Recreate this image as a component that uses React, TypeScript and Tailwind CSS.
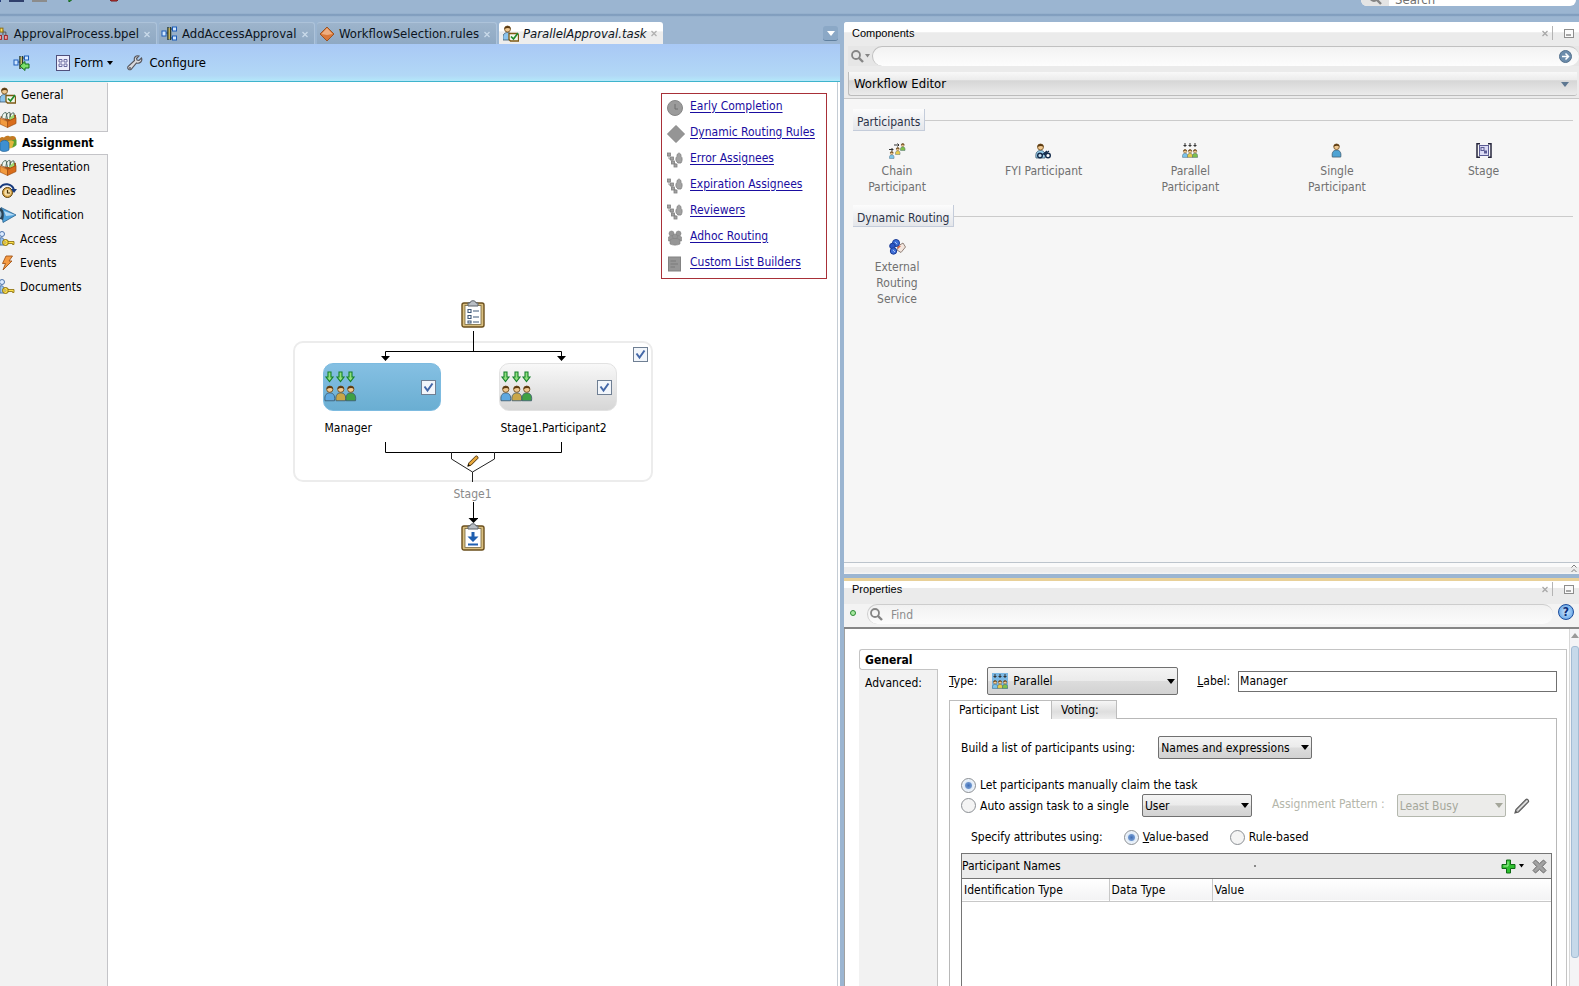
import { useState } from 'react'
import type { ReactNode } from 'react'
import clsx from 'clsx'

/* ---------- icons ---------- */

type IconProps = { className?: string }

function Person({ x, y, color, s = 1 }: { x: number; y: number; color: string; s?: number }) {
  return (
    <g transform={`translate(${x} ${y}) scale(${s})`}>
      <path d="M1 15 C0 9 3 7.500 5.500 7.500 C8 7.500 11 9 10 15 Z" fill={color} stroke="#3d5a6e" strokeWidth="0.800" />
      <circle cx="5.500" cy="4" r="3" fill="#f0c890" stroke="#6b4a1a" strokeWidth="0.800" />
      <path d="M2.500 4 C2 0 9 0 8.500 4 C7 2.500 5 2.500 2.500 4 Z" fill="#5b3a12" />
    </g>
  )
}

function FlowIcon({ className, arrow }: IconProps & { arrow?: boolean }) {
  return (
    <svg className={className} width="17" height="16" viewBox="0 0 17 16" fill="none">
      <path d="M4 7H7M10 3H12M10 12H12" stroke="#1d3f7a" />
      <path d="M7 1V14M9.500 1V14" stroke="#2c3b2c" strokeWidth="1.500" />
      <path d="M8.200 2V13" stroke="#e8c33a" />
      <rect x="1" y="5" width="4" height="5" fill="#cfe6ff" stroke="#1c5cb8" />
      <rect x="11.500" y="1" width="4" height="4" fill="#cfe6ff" stroke="#1c5cb8" />
      {!arrow && <rect x="11.500" y="10" width="4" height="4" fill="#cfe6ff" stroke="#1c5cb8" />}
      {arrow && <path d="M7 11 L12 6.500 V9 H16 V13 H12 V15.500 Z" fill="#7ee06a" stroke="#12701a" />}
    </svg>
  )
}

function BpelIcon({ className }: IconProps) {
  return (
    <svg className={className} width="9" height="16" viewBox="0 0 9 16" fill="none">
      <path d="M1 4H3V9M3 6H6V10" stroke="#555" />
      <rect x="0" y="2" width="3" height="4" fill="#ffe05c" stroke="#8a6a10" />
      <rect x="4.500" y="9.500" width="3" height="4" fill="#f3a0a0" stroke="#a02828" />
      <rect x="-1" y="9.500" width="2.500" height="4" fill="#f3a0a0" stroke="#a02828" />
    </svg>
  )
}

function RulesIcon({ className }: IconProps) {
  return (
    <svg className={className} width="16" height="16" viewBox="0 0 16 16">
      <path d="M8 1 L15 8 L8 15 L1 8 Z" fill="#d9783a" stroke="#9a5424" />
      <path d="M8 2 L13.500 8 L8 9 L2.500 8 Z" fill="#f6c39c" opacity="0.700" />
    </svg>
  )
}

function TaskIcon({ className }: IconProps) {
  return (
    <svg className={className} width="16" height="17" viewBox="0 0 16 17">
      <Person x={-1} y={0} color="#8cc4ee" />
      <path d="M6 8.500 H14 L15.500 10 V16 H7.500 L6 14.500 Z" fill="#f4f7ec" stroke="#7d5a14" strokeWidth="1.300" />
      <path d="M8 11.500 L10.500 14 L15 8" stroke="#1f8a2a" strokeWidth="1.700" fill="none" />
    </svg>
  )
}

function BoxIcon({ className }: IconProps) {
  return (
    <svg className={className} width="17" height="17" viewBox="0 0 17 17">
      <path d="M0 6 L8 2 L16 4 V8 L8 11 Z" fill="#a8561a" />
      <path d="M2 7 C2 3 4 1.500 6 1.500 L7.500 8 M6 8 C6 3 8 1 10 1.500 V8 M10 8 C10 3 12 1.500 14 2 V7" fill="#eef5ee" stroke="#3f5f55" strokeWidth="0.900" />
      <path d="M9 7.500 L13.500 3.500 L14.500 6.500 L10 9 Z" fill="#9fd86a" />
      <path d="M0 7 L7.500 10.500 V16.500 L0 13 Z" fill="#f19a3e" stroke="#a8561a" strokeWidth="0.700" />
      <path d="M7.500 10.500 L16 6.500 V12.500 L7.500 16.500 Z" fill="#d96d1c" stroke="#9c4c0c" strokeWidth="0.700" />
    </svg>
  )
}

function AssignIcon({ className }: IconProps) {
  return (
    <svg className={className} width="17" height="17" viewBox="0 0 17 17">
      <path d="M5 13 V4 C8 0 15 1 16.500 5 V10 C15 12 12 13 10 13 Z" fill="#5ba12e" />
      <path d="M3 5 C4 0 9 0 10 2 C12 0 16 1 16 4 C12 6 6 6 3 5 Z" fill="#c47a24" />
      <path d="M7 14 V7 C9 5 13 5 14 7 L12 13 Z" fill="#e2b53e" />
      <path d="M0 3 C2 1 5 2 5 5 L3 7 H0 Z" fill="#c47a24" />
      <path d="M0 15 V8 C2 4 8 5 9 8 L9 15 C6 17 2 17 0 15 Z" fill="#3d8fd0" stroke="#205a8c" strokeWidth="0.600" />
    </svg>
  )
}

function ClockIcon({ className }: IconProps) {
  return (
    <svg className={className} width="17" height="16" viewBox="0 0 17 16" fill="none">
      <circle cx="7.500" cy="9.500" r="5" fill="#d9a548" stroke="#5f430c" />
      <circle cx="7.500" cy="9.500" r="3.200" fill="#f6dfa8" />
      <path d="M7.500 7V10H10" stroke="#4a3408" strokeWidth="1.200" />
      <path d="M0 5 C3 -0.500 12 0 14 7" stroke="#173a7c" strokeWidth="2" />
      <path d="M11 6 H17 L14 10 Z" fill="#173a7c" />
    </svg>
  )
}

function HornIcon({ className }: IconProps) {
  return (
    <svg className={className} width="17" height="16" viewBox="0 0 17 16">
      <path d="M1 0.500 L16 8 L3 15.500 Z" fill="#4fa3dd" stroke="#28618c" strokeWidth="0.800" />
      <path d="M4 4 L15 8 L6 9 Z" fill="#b7dcf6" />
      <path d="M0 1 C3 1 5 6 3 13 L0 12 Z" fill="#2c4456" />
      <path d="M0 4 C2 5 2 9 0 11 Z" fill="#8fb4cc" />
    </svg>
  )
}

function KeyIcon({ className }: IconProps) {
  return (
    <svg className={className} width="15" height="16" viewBox="0 0 15 16" fill="none">
      <circle cx="2" cy="3" r="2.500" fill="#dcebff" stroke="#4d74ab" />
      <path d="M0 7 C3 6 5 8 4 14 H0 Z" fill="#9cc7ee" stroke="#4d74ab" />
      <circle cx="5.500" cy="11.500" r="3" fill="#ffe24a" stroke="#866a08" />
      <circle cx="5" cy="11.500" r="0.900" fill="#fff" stroke="#866a08" strokeWidth="0.600" />
      <path d="M8 10.500 H14 V13.500 H12.500 V12.500 H8 Z" fill="#ffe24a" stroke="#866a08" strokeWidth="0.800" />
    </svg>
  )
}

function BoltIcon({ className }: IconProps) {
  return (
    <svg className={className} width="15" height="16" viewBox="0 0 15 16">
      <path d="M6 1 H12.500 L9 6 H12 L3 15 L5.500 8.500 H2.500 Z" fill="#f59a42" stroke="#a2561a" strokeWidth="0.900" />
    </svg>
  )
}

function FormIcon({ className }: IconProps) {
  return (
    <svg className={className} width="14" height="16" viewBox="0 0 14 16" fill="none">
      <rect x="0.500" y="0.500" width="13" height="15" fill="#eeeefc" stroke="#50507c" />
      <path d="M3 4.500h3v2.500h-3zM8 4.500h3v2.500h-3zM3 9h3v2.500h-3zM8 9h3v2.500h-3z" stroke="#6a6aa0" strokeWidth="1" />
    </svg>
  )
}

function WrenchIcon({ className }: IconProps) {
  return (
    <svg className={className} width="16" height="16" viewBox="0 0 16 16">
      <path
        d="M14.500 3 L12 5.500 L10 5 L9.500 3.500 L12 1 C9 0 6.500 2.500 7.500 5.500 L1 11.500 C0 13.500 2 15.500 4 14.500 L9.500 8 C13 9 15.800 6 14.500 3 Z"
        fill="#d9d9dc"
        stroke="#55555c"
        strokeWidth="1.100"
      />
      <circle cx="3" cy="13" r="0.900" fill="#55555c" />
    </svg>
  )
}

function Caret({ className, size = 6 }: IconProps & { size?: number }) {
  return (
    <svg className={className} width={size} height={size / 2 + 1} viewBox="0 0 8 5" preserveAspectRatio="none" fill="currentColor">
      <path d="M0 0H8L4 5Z" />
    </svg>
  )
}

function CrossIcon({ className }: IconProps) {
  return (
    <svg className={className} width="6" height="7" viewBox="0 0 6 7" fill="none" stroke="currentColor" strokeWidth="1.300">
      <path d="M0.500 1 L5.500 6 M5.500 1 L0.500 6" />
    </svg>
  )
}

function MinimizeIcon() {
  return (
    <svg width="10" height="9" viewBox="0 0 10 9" fill="none">
      <rect x="0.500" y="0.500" width="9" height="8" fill="#fafafa" stroke="#8d8d8d" />
      <path d="M2 6H7" stroke="#8d8d8d" strokeWidth="1.500" />
    </svg>
  )
}

function SearchIcon({ className }: IconProps) {
  return (
    <svg className={className} width="13" height="13" viewBox="0 0 13 13" fill="none" stroke="#858585">
      <circle cx="5" cy="5" r="4" strokeWidth="1.800" />
      <path d="M8 8 L12 12" strokeWidth="2.400" />
    </svg>
  )
}

/* grey icons beside the links */
function GreyClock() {
  return (
    <svg width="18" height="18" viewBox="0 0 18 18" fill="none">
      <circle cx="8" cy="9" r="7.500" fill="#9b9b9b" stroke="#868686" />
      <path d="M8 5V10H11" stroke="#6e6e6e" />
    </svg>
  )
}

function GreyDiamond() {
  return (
    <svg width="18" height="18" viewBox="0 0 18 18">
      <path d="M9 0.500 L17.500 9 L9 17.500 L0.500 9 Z" fill="#959595" stroke="#858585" />
    </svg>
  )
}

function GreyAssignees() {
  return (
    <svg width="18" height="18" viewBox="0 0 18 18" fill="#a2a2a2" stroke="#808080" strokeWidth="0.800">
      <path d="M2 4 V8 H5 V12 H8 V14" fill="none" />
      <rect x="0.500" y="2" width="3" height="3" />
      <rect x="3.500" y="6" width="3" height="3" />
      <rect x="4.500" y="10" width="3" height="3" />
      <rect x="7" y="13" width="3" height="3" />
      <path d="M10 11 C8 9 9 6 10 5.500 C9.500 1 14.500 1 14 5.500 C15.500 6 15.500 10 14 12 H11 Z" />
    </svg>
  )
}

function GreyGroup() {
  return (
    <svg width="18" height="18" viewBox="0 0 18 18" fill="#969696" stroke="#828282" strokeWidth="0.600">
      <circle cx="4.500" cy="4.500" r="2.500" />
      <circle cx="11.500" cy="4.500" r="2.500" />
      <path d="M1.500 8 C3 6 13 6 14.500 8 V12 H1.500 Z" />
      <circle cx="8" cy="7.500" r="2.500" />
      <path d="M3 11 C5 9 11 9 13 11 V15 C10 16.500 6 16.500 3 15 Z" />
    </svg>
  )
}

function GreyList() {
  return (
    <svg width="18" height="18" viewBox="0 0 18 18" fill="none">
      <rect x="1.500" y="2" width="12" height="14" fill="#969696" stroke="#838383" />
      <path d="M3.500 6H9M3.500 9H11M3.500 12H8" stroke="#7a7a7a" />
    </svg>
  )
}

/* component palette */
function ChainIcon() {
  return (
    <svg width="17" height="16" viewBox="0 0 17 16" fill="none">
      <path d="M0 6.500H4M5 2H10M2.500 5L4 6.500L2.500 8M8.500 0.500L10 2L8.500 3.500" stroke="#333" />
      <Person x={0} y={8} s={0.5} color="#7cc4ea" />
      <Person x={6} y={4} s={0.5} color="#e8cc4a" />
      <Person x={11} y={0} s={0.5} color="#7fc04a" />
    </svg>
  )
}

function FyiIcon() {
  return (
    <svg width="17" height="16" viewBox="0 0 17 16" fill="none">
      <Person x={0} y={0} color="#9ad0ee" />
      <circle cx="5" cy="12.500" r="2.300" fill="#cfe6f4" stroke="#142c4c" strokeWidth="1.400" />
      <circle cx="13" cy="12.500" r="2.300" fill="#fff" stroke="#142c4c" strokeWidth="1.400" />
      <path d="M7 12 L12 8 M9 12 L14 8" stroke="#142c4c" strokeWidth="1.100" />
    </svg>
  )
}

function ParallelIcon() {
  return (
    <svg width="16" height="15" viewBox="0 0 16 15" fill="none">
      <path d="M3 0V4M8 0V4M13 0V4M1.500 2.500H4.500M6.500 2.500H9.500M11.500 2.500H14.500" stroke="#333" />
      <Person x={0} y={6} s={0.56} color="#7cc4ea" />
      <Person x={5} y={6} s={0.56} color="#e8cc4a" />
      <Person x={10} y={6} s={0.56} color="#7fc04a" />
    </svg>
  )
}

function SingleIcon() {
  return (
    <svg width="12" height="15" viewBox="0 0 12 16">
      <Person x={0} y={0} color="#4ea3d4" />
    </svg>
  )
}

function StageIcon() {
  return (
    <svg width="16" height="15" viewBox="0 0 16 15" fill="none">
      <path d="M4 0.750H1V14.250H4M12 0.750H15V14.250H12" stroke="#26263c" strokeWidth="1.500" />
      <rect x="3.500" y="2.500" width="9" height="10" fill="#dcdcf4" stroke="#5c5c94" />
      <rect x="5" y="4.500" width="3" height="3" stroke="#5c5c94" />
      <rect x="8" y="7.500" width="3" height="3" fill="#5c5c94" />
    </svg>
  )
}

function ExternalIcon() {
  return (
    <svg width="17" height="16" viewBox="0 0 17 16" fill="none">
      <path d="M9 7 L14 4 L16.500 8 L12 13.500 L8 11 Z" fill="#f3e6de" stroke="#7a6a62" strokeWidth="0.800" />
      <path d="M8 6 L12 7 L9 10 Z" fill="#d8694a" />
      <circle cx="7" cy="4" r="3.500" fill="#3f6fd8" stroke="#1c3c94" />
      <circle cx="3.500" cy="7" r="2.800" fill="#2c56c4" stroke="#1c3c94" />
      <circle cx="4.500" cy="12" r="3.200" fill="#3f6fd8" stroke="#1c3c94" />
      <path d="M6 3L8 5M4 11L6 13" stroke="#a9c4f6" />
    </svg>
  )
}

function Clipboard({ children }: { children: ReactNode }) {
  return (
    <svg width="24" height="28" viewBox="0 0 24 28" fill="none">
      <rect x="1" y="3" width="22" height="24" rx="2" fill="#d9bf80" stroke="#6b4f1c" strokeWidth="1.400" />
      <rect x="4" y="5.500" width="16" height="19" fill="#fff" stroke="#77683f" strokeWidth="0.800" />
      <path d="M7 6 V3 H9 C9 0 15 0 15 3 H17 V6 Z" fill="#b9bec4" stroke="#5e646b" />
      {children}
    </svg>
  )
}

function ParallelPeople() {
  return (
    <svg width="34" height="32" viewBox="0 0 34 32">
      {[5.5, 16.5, 26.5].map((cx) => (
        <path
          key={cx}
          transform={`translate(${cx} 0)`}
          d="M-1.500 1 H1.500 V6 H3.500 L0 10.500 L-3.500 6 H-1.500 Z"
          fill="#8ee07c"
          stroke="#15802a"
          strokeWidth="1.100"
        />
      ))}
      <Person x={0} y={14} color="#5fa8e0" s={1.05} />
      <Person x={11} y={14} color="#c9a648" s={1.05} />
      <Person x={21} y={14} color="#3fa044" s={1.05} />
    </svg>
  )
}

function PencilIcon({ body, edge }: { body: string; edge: string }) {
  return (
    <svg width="16" height="16" viewBox="0 0 16 16">
      <path d="M1 15 L2 11.500 L12 1.500 C13 0.500 15 2 14.500 3.800 L4.500 14 Z" fill={body} stroke={edge} strokeWidth="1.200" />
      <path d="M1 15 L1.800 12.500 L3.500 14.200 Z" fill={edge} />
      <path d="M4 12 L13 3" stroke="#fff" strokeWidth="1" opacity="0.600" />
    </svg>
  )
}

/* ---------- data ---------- */

const editorTabs = [
  { name: 'ApprovalProcess.bpel', icon: <BpelIcon />, width: 'w-[157px] pl-0 gap-[5px]' },
  { name: 'AddAccessApproval', icon: <FlowIcon />, width: 'w-[156px] pl-[2px] gap-1' },
  { name: 'WorkflowSelection.rules', icon: <RulesIcon />, width: 'w-[180px] pl-[2px] gap-1' },
  { name: 'ParallelApproval.task', icon: <TaskIcon />, width: 'w-[164px] pl-1 gap-1', active: true },
]

const navItems = [
  { name: 'General', icon: <TaskIcon /> },
  { name: 'Data', icon: <BoxIcon /> },
  { name: 'Assignment', icon: <AssignIcon />, active: true },
  { name: 'Presentation', icon: <BoxIcon /> },
  { name: 'Deadlines', icon: <ClockIcon /> },
  { name: 'Notification', icon: <HornIcon /> },
  { name: 'Access', icon: <KeyIcon /> },
  { name: 'Events', icon: <BoltIcon /> },
  { name: 'Documents', icon: <KeyIcon /> },
]

const taskLinks = [
  { name: 'Early Completion', icon: <GreyClock /> },
  { name: 'Dynamic Routing Rules', icon: <GreyDiamond /> },
  { name: 'Error Assignees', icon: <GreyAssignees /> },
  { name: 'Expiration Assignees', icon: <GreyAssignees /> },
  { name: 'Reviewers', icon: <GreyAssignees /> },
  { name: 'Adhoc Routing', icon: <GreyGroup /> },
  { name: 'Custom List Builders', icon: <GreyList /> },
]

const palette = [
  {
    title: 'Participants',
    items: [
      { lines: ['Chain', 'Participant'], icon: <ChainIcon /> },
      { lines: ['FYI Participant'], icon: <FyiIcon /> },
      { lines: ['Parallel', 'Participant'], icon: <ParallelIcon /> },
      { lines: ['Single', 'Participant'], icon: <SingleIcon /> },
      { lines: ['Stage'], icon: <StageIcon /> },
    ],
  },
  {
    title: 'Dynamic Routing',
    items: [{ lines: ['External', 'Routing', 'Service'], icon: <ExternalIcon /> }],
  },
]

/* ---------- small controls ---------- */

function CheckBox({ label }: { label: string }) {
  const [checked, setChecked] = useState(true)
  return (
    <span className="grid size-[15px] shrink-0">
      <input
        type="checkbox"
        aria-label={label}
        checked={checked}
        onChange={() => setChecked(!checked)}
        className="col-start-1 row-start-1 size-[15px] appearance-none border border-[#6f7f93] bg-[#f2f6fb]"
      />
      {checked && (
        <svg className="pointer-events-none col-start-1 row-start-1" width="15" height="15" viewBox="0 0 15 15" fill="none">
          <path d="M3.500 6.500 L6.500 10.500 L11.500 3.500" stroke="#4468a8" strokeWidth="2" />
        </svg>
      )}
    </span>
  )
}

const radioClass =
  'size-[15px] shrink-0 appearance-none rounded-full border border-[#8b8f94] bg-[#f4f4f4] checked:bg-[radial-gradient(circle,#3f6db5_0,#6f97cf_3px,#dfeaf7_4px,#f4f8fc_7px)]'

type SelectProps = { id: string; label?: string; value: string; className: string; icon?: ReactNode; disabled?: boolean }

function Select({ id, label, value, className, icon, disabled }: SelectProps) {
  return (
    <span className={clsx('grid items-center', className)}>
      <select
        id={id}
        aria-label={label}
        disabled={disabled}
        className={clsx(
          'col-start-1 row-start-1 h-full w-full appearance-none rounded-[2px] border',
          icon ? 'pl-[25px]' : 'pl-[2px]',
          disabled
            ? 'border-[#b4b8ae] bg-[#ececea] text-[#a5a79b]'
            : 'border-[#707070] bg-[linear-gradient(#f4f4f4,#ebebeb_48%,#dcdcdc_52%,#d2d2d2)] text-black',
        )}
      >
        <option>{value}</option>
      </select>
      {icon && <span className="pointer-events-none col-start-1 row-start-1 ml-[5px] justify-self-start">{icon}</span>}
      <Caret size={8} className={clsx('pointer-events-none col-start-1 row-start-1 mr-[3px] justify-self-end', disabled && 'text-[#a5a79b]')} />
    </span>
  )
}

function PanelHeader({ title, compact }: { title: string; compact?: boolean }) {
  return (
    <header
      className={clsx(
        "flex shrink-0 items-center pr-[5px] pl-2 font-['Liberation_Sans',Arial,sans-serif] text-[11px] text-black",
        compact ? 'h-[23px] bg-[linear-gradient(#fff_28%,#ebebeb_32%)] pb-[7px]' : 'h-6 bg-[linear-gradient(#fff_40%,#ebebeb_45%)] pb-[2px]',
      )}
    >
      <h2 className="flex-1">{title}</h2>
      <button aria-label={`Close ${title}`} className="mr-1 text-[#a8a8a8]">
        <CrossIcon />
      </button>
      <span className="mr-[11px] h-[14px] w-px bg-[#b4b4b4]" />
      <button aria-label={`Minimize ${title}`}>
        <MinimizeIcon />
      </button>
    </header>
  )
}

/* ---------- editor ---------- */

function EditorTabs() {
  return (
    <div className="flex h-[22px] shrink-0 items-stretch gap-[2px]">
      {editorTabs.map((tab) => (
        <div
          key={tab.name}
          className={clsx(
            'flex items-center rounded-t-[3px] pt-px pr-[6px]',
            tab.width,
            tab.active
              ? 'bg-[linear-gradient(#fff_40%,#ededed_45%)] italic'
              : 'border-t border-r border-t-[#adc3da] border-r-[#adc3da] bg-[linear-gradient(#9db4cc,#8fa9c3)]',
          )}
        >
          {tab.icon}
          <button className="flex-1 text-left text-[13px] whitespace-nowrap text-[#0c1420]">{tab.name}</button>
          <button aria-label={`Close ${tab.name}`} className={clsx('self-start pt-[7px]', tab.active ? 'text-[#b0b0b0]' : 'text-[#c9daea]')}>
            <CrossIcon />
          </button>
        </div>
      ))}
      <button
        aria-label="Tab list"
        className="mt-1 mr-[2px] ml-auto flex h-[15px] w-[15px] items-center justify-center rounded-[3px] border-b border-[#5f7f9f] bg-[#8ba8c6] text-white"
      >
        <Caret size={8} />
      </button>
    </div>
  )
}

function ParticipantCard({ name, selected }: { name: string; selected?: boolean }) {
  return (
    <div className="w-[118px]">
      <div
        className={clsx(
          'flex h-12 items-center justify-between rounded-[10px] border pr-1',
          selected
            ? 'border-[#7dbbe0] bg-[linear-gradient(#85c0e3,#6aaed2)]'
            : 'border-[#e2e2e2] bg-[linear-gradient(#f8f8f8,#d6d6d6)]',
        )}
      >
        <ParallelPeople />
        <CheckBox label={`Enable ${name}`} />
      </div>
      <p className="mt-[9px] ml-[2px] h-4 whitespace-nowrap">{name}</p>
    </div>
  )
}

function Canvas() {
  return (
    <div className="relative flex flex-1 flex-col items-center border-r border-[#c4ccd4] bg-white pt-[218px]">
      <ul className="absolute top-[11px] right-[10px] w-[166px] border border-[#a83038] pb-[2px] pl-[5px]">
        {taskLinks.map((link) => (
          <li key={link.name} className="flex h-[26px] items-center gap-[5px]">
            <span className="pt-px">{link.icon}</span>
            <a href="#" className="pb-[3px] whitespace-nowrap text-[#1a0da0] underline underline-offset-2">
              {link.name}
            </a>
          </li>
        ))}
      </ul>

      <Clipboard>
        <path d="M7 9.500h3v3h-3zM7 15.500h3v3h-3zM7 21h3v2h-3zM12 11h6M12 17h6M12 22h6" stroke="#3f5878" strokeWidth="1.100" />
      </Clipboard>

      <section className="relative mt-[13px] w-[360px] rounded-[10px] border-2 border-[#ececec]">
        <svg className="-ml-[2px] block overflow-visible" width="360" height="20" viewBox="0 0 360 20" fill="none">
          <path d="M180.500 -12V8.500M92.500 14V8.500H268.500V14" stroke="#000" />
          <path d="M88 13H97L92.500 18ZM264 13H273L268.500 18Z" fill="#000" />
        </svg>
        <div className="flex gap-[58px] pl-7">
          <ParticipantCard name="Manager" selected />
          <ParticipantCard name="Stage1.Participant2" />
        </div>
        <svg className="mt-[6px] -ml-[2px] block overflow-visible" width="360" height="38" viewBox="0 0 360 38" fill="none">
          <path d="M92.500 0V10.500H268.500V0" stroke="#000" />
          <path d="M158.500 10V17L179.500 30L201.500 17V10M179.500 30V40" stroke="#222" />
          <g transform="translate(174 13) scale(0.750)">
            <path d="M1 15 L2.500 10.500 L11.500 1.500 C13 0.500 15.500 2.500 14.500 4.500 L5.500 13.500 Z" fill="#e8a83c" stroke="#4a3008" strokeWidth="1.300" />
            <path d="M1 15 L2 12 L4 14 Z" fill="#000" />
          </g>
        </svg>
        <div className="absolute top-1 right-[3px]">
          <CheckBox label="Enable Stage1" />
        </div>
      </section>

      <p className="mt-1 text-[#8a8a8a]">Stage1</p>
      <svg width="10" height="21" viewBox="0 0 10 21">
        <path d="M5.500 0V16" stroke="#000" />
        <path d="M0.500 16H10.500L5.500 21Z" fill="#000" />
      </svg>
      <Clipboard>
        <path d="M10.500 9h3v4.500h4l-5.500 5.500l-5.500-5.500h4zM7 20.500h10v2h-10z" fill="#1f5fb0" />
      </Clipboard>
    </div>
  )
}

function Editor() {
  return (
    <section className="flex min-w-0 flex-col">
      <EditorTabs />
      <div className="flex h-[38px] shrink-0 items-center border-b border-[#3fb4cc] bg-[linear-gradient(#a9c8f5,#b2d8f6_85%,#b4e8fa)] pl-[13px] text-[13px]">
        <button aria-label="Back to process">
          <FlowIcon arrow />
        </button>
        <button className="ml-[26px] flex items-center gap-1">
          <FormIcon />
          Form
          <Caret size={6} />
        </button>
        <button className="ml-[14px] flex items-center gap-[6px]">
          <WrenchIcon />
          Configure
        </button>
      </div>
      <div className="flex min-h-0 flex-1 bg-white pr-[2px]">
        <nav className="flex w-[108px] shrink-0 flex-col bg-[#f2f2f2] pt-px">
          {navItems.map((item) => (
            <a
              key={item.name}
              href="#"
              className={clsx(
                'flex h-6 items-center gap-[5px]',
                item.active ? 'border-y border-[#c4c4c8] bg-white font-bold' : 'border-r border-[#c4c4c8]',
              )}
            >
              {item.icon}
              {item.name}
            </a>
          ))}
          <div className="flex-1 border-r border-[#c4c4c8]" />
        </nav>
        <Canvas />
      </div>
    </section>
  )
}

/* ---------- components panel ---------- */

function ComponentsPanel() {
  return (
    <section className="flex min-h-0 flex-col overflow-hidden rounded-tl-[3px] bg-[#f6f6f6]">
      <PanelHeader title="Components" />
      <div className="shrink-0 border-b border-[#c8c8c8] bg-[#ebebeb] pl-1">
        <div className="flex h-5 items-center bg-[#e6e6e6]">
          <button aria-label="Search options" className="flex w-6 shrink-0 items-center gap-px pl-[3px] text-[#858585]">
            <SearchIcon />
            <Caret size={5} />
          </button>
          <div className="flex h-5 flex-1 items-center rounded-full border-t border-l border-[#c0c0c0] bg-[linear-gradient(#f2f2f2,#fdfdfd)] pr-[7px] pl-2">
            <input aria-label="Search components" className="min-w-0 flex-1 bg-transparent outline-none" />
            <button aria-label="Go">
              <svg width="13" height="13" viewBox="0 0 13 13" fill="none">
                <circle cx="6.500" cy="6.500" r="6" fill="#6c8cab" stroke="#54718d" />
                <path d="M3 6.500H9M6.500 3.500L9.500 6.500L6.500 9.500" stroke="#fff" strokeWidth="1.500" />
              </svg>
            </button>
          </div>
        </div>
        <div className="mt-[6px] mr-[2px] mb-[2px] flex">
          <button className="flex h-6 flex-1 items-center justify-between rounded-b-[3px] border-b border-l border-[#bcbcbc] bg-[linear-gradient(#f8f8f8,#ececec_34%,#d6d6d6_38%,#ebebeb)] pt-px pr-2 pl-[5px] text-[13px]">
            Workflow Editor
            <Caret size={8} className="text-[#5d7791]" />
          </button>
        </div>
      </div>
      <div className="min-h-0 flex-1 pt-[10px] pl-[9px]">
        {palette.map((group) => (
          <div key={group.title} className="mb-[10px]">
            <div className="mr-[6px] flex items-center">
              <h3 className="h-[22px] border-r border-b border-[#c4ccda] bg-[linear-gradient(#fcfcfc,#e4e6ea)] pr-1 pl-1 leading-[27px] text-[#2c3448]">
                {group.title}
              </h3>
              <span className="h-px flex-1 bg-[#cbcbcb]" />
            </div>
            <div className="grid grid-cols-[repeat(5,20.2%)] pt-3">
              {group.items.map((item) => (
                <button key={item.lines.join(' ')} className="flex w-[88px] flex-col items-center text-[#707070]">
                  <span className="flex h-5 items-start">{item.icon}</span>
                  {item.lines.map((line) => (
                    <span key={line} className="whitespace-nowrap">
                      {line}
                    </span>
                  ))}
                </button>
              ))}
            </div>
          </div>
        ))}
      </div>
      <div className="flex h-3 shrink-0 items-center justify-end border-t border-[#bcc4cc] bg-[linear-gradient(#fafafa_35%,#ececec_40%_80%,#f6f6f6)] pr-[2px]">
        <svg width="6" height="9" viewBox="0 0 6 9" fill="none" stroke="#7c7c7c">
          <path d="M0.500 3.500L3 1L5.500 3.500M0.500 8L3 5.500L5.500 8" />
        </svg>
      </div>
    </section>
  )
}

/* ---------- properties panel ---------- */

function PropertiesForm() {
  return (
    <div className="flex min-w-0 flex-1 flex-col pt-[3px] pr-[9px] pl-[11px]">
      <div className="flex h-7 items-center">
        <label htmlFor="type">
          <u>T</u>ype:
        </label>
        <Select
          id="type"
          value="Parallel"
          className="ml-[10px] h-7 w-[191px] shrink-0"
          icon={
            <span className="flex size-4 items-center justify-center bg-[#7cb8e4]">
              <ParallelIcon />
            </span>
          }
        />
        <label htmlFor="label" className="ml-[19px]">
          <u>L</u>abel:
        </label>
        <input id="label" defaultValue="Manager" className="ml-2 h-[21px] min-w-0 flex-1 border border-[#707070] bg-white px-px" />
      </div>

      <div className="mt-[5px] flex h-[19px]">
        <button className="w-[102px] border-t border-l border-[#bdbdbd] bg-white pl-[9px] text-left">Participant List</button>
        <button className="w-[66px] border-t border-r border-l border-[#bdbdbd] bg-[linear-gradient(#f6f6f6,#dedede_60%,#ededed)] pl-[9px] text-left">
          Voting:
        </button>
        <span className="flex-1 border-b border-[#b8b8b8]" />
      </div>

      <div className="flex min-h-0 flex-1 flex-col border-x border-[#b8b8b8] pt-[17px] pr-1 pl-[11px]">
        <div className="flex h-[23px] items-center">
          <label htmlFor="build">Build a list of participants using:</label>
          <Select id="build" value="Names and expressions" className="ml-[23px] h-[23px] w-[154px]" />
        </div>

        <div className="mt-[17px] flex h-[18px] items-center gap-1">
          <input type="radio" name="claim" id="manual" defaultChecked className={radioClass} />
          <label htmlFor="manual">Let participants manually claim the task</label>
        </div>
        <div className="flex h-[23px] items-center gap-1">
          <input type="radio" name="claim" id="auto" className={radioClass} />
          <label htmlFor="auto" className="whitespace-nowrap">
            Auto assign task to a single
          </label>
          <Select id="assignee" label="Assignee kind" value="User" className="ml-[9px] h-[23px] w-[110px]" />
          <label htmlFor="pattern" className="ml-4 pb-1 whitespace-nowrap text-[#b4b6aa]">
            Assignment Pattern :
          </label>
          <Select id="pattern" value="Least Busy" disabled className="ml-2 h-[23px] w-[109px]" />
          <button aria-label="Edit pattern" className="ml-1">
            <PencilIcon body="#c4c4c4" edge="#5c5c5c" />
          </button>
        </div>

        <fieldset className="mt-3 flex h-5 items-center pl-[10px]">
          <span>Specify attributes using:</span>
          <input type="radio" name="spec" id="value-based" defaultChecked className={clsx(radioClass, 'mr-1 ml-[21px]')} />
          <label htmlFor="value-based">
            <u>V</u>alue-based
          </label>
          <input type="radio" name="spec" id="rule-based" className={clsx(radioClass, 'mr-1 ml-[21px]')} />
          <label htmlFor="rule-based">Rule-based</label>
        </fieldset>

        <div className="mt-1 flex min-h-0 flex-1 flex-col border-x border-t border-[#757575]">
          <div className="flex h-[25px] shrink-0 items-center border-b border-[#757575] bg-[#ebebeb] pr-1">
            <h3 className="flex-1">Participant Names</h3>
            <span className="size-[2px] bg-[#888]" />
            <div className="flex flex-1 items-center justify-end">
              <button aria-label="Add participant" className="flex items-center gap-[3px]">
                <svg width="15" height="15" viewBox="0 0 15 15">
                  <path d="M5.500 1H9.500V5.500H14V9.500H9.500V14H5.500V9.500H1V5.500H5.500Z" fill="#2fc02f" stroke="#0f6a14" />
                  <path d="M7 2.500V7H2.500" stroke="#a4f09c" fill="none" />
                </svg>
                <Caret size={5} />
              </button>
              <button aria-label="Remove participant" className="ml-2">
                <svg width="15" height="15" viewBox="0 0 15 15">
                  <path d="M3.500 1L7.500 4.700L11.500 1L14 3.500L10.300 7.500L14 11.500L11.500 14L7.500 10.300L3.500 14L1 11.500L4.700 7.500L1 3.500Z" fill="#a2a2a2" stroke="#6a6a6a" />
                </svg>
              </button>
            </div>
          </div>
          <table className="w-full border-collapse text-left">
            <thead>
              <tr className="h-[22px] border-b border-[#c8c8c8] bg-[linear-gradient(#fff,#f3f3f4)]">
                <th className="w-[147px] border-r border-[#c8c8c8] pl-[2px] font-normal">Identification Type</th>
                <th className="w-[103px] border-r border-[#c8c8c8] pl-[2px] font-normal">Data Type</th>
                <th className="pl-[2px] font-normal">Value</th>
              </tr>
            </thead>
          </table>
        </div>
      </div>
    </div>
  )
}

function PropertiesPanel() {
  return (
    <section className="flex min-h-0 flex-col overflow-hidden border-t-[3px] border-[#e8d098] bg-white">
      <PanelHeader title="Properties" compact />
      <div className="flex h-[25px] shrink-0 items-start border-b-2 border-[#868686] bg-[#f3f3f3] pr-[5px] pl-[6px]">
        <span className="mt-[6px] size-[6px] rounded-full border border-[#2c8a34] bg-[#a8e8a0]" />
        <div className="ml-[11px] flex h-5 flex-1 items-center gap-[8px] rounded-full border-t border-l border-[#cdcdcd] bg-[linear-gradient(#f1f1f1,#fcfcfc)] pl-[2px]">
          <SearchIcon />
          <input aria-label="Find" placeholder="Find" className="min-w-0 flex-1 bg-transparent outline-none placeholder:text-[#8c8c8c]" />
        </div>
        <button aria-label="Help" className="ml-[5px] size-4 rounded-full border border-[#1c4c9c] bg-[radial-gradient(#cfe6fb,#4c98e4)] text-[12px] leading-[14px] font-bold text-[#0c2c78]">
          ?
        </button>
      </div>
      <div className="flex min-h-0 flex-1 border-l border-[#a0a0a0]">
        <div className="flex min-w-0 flex-1 border-r border-[#d8d8d8] pt-5 pr-[2px] pl-[14px]">
          <div className="flex w-[79px] shrink-0 flex-col">
            <button className="h-[21px] rounded-l-[3px] border-y border-l border-[#c4c4c4] bg-white pl-[5px] text-left font-bold">General</button>
            <div className="flex-1 border-r border-[#c4c4c4] bg-[#f2f2f2]">
              <button className="h-[26px] pl-[6px]">Advanced:</button>
            </div>
          </div>
          <div className="flex min-w-0 flex-1 border-t border-r border-[#c4c4c4] pt-[14px]">
            <PropertiesForm />
          </div>
        </div>
        <div className="flex w-[9px] shrink-0 flex-col items-center bg-[#f4f4f6] pt-1">
          <Caret size={8} className="rotate-180 text-[#9a9a9a]" />
          <div className="mt-2 mb-7 w-2 flex-1 rounded-[3px] border border-[#a4bcd4] bg-[#c6d9ea]" />
        </div>
      </div>
    </section>
  )
}

/* ---------- page ---------- */

function TopBar() {
  return (
    <div className="h-[22px] shrink-0 overflow-hidden bg-[linear-gradient(#9bb5d1_60%,#7896b8_68%,#9bb5d1_76%)]">
      <div className="-mt-[18px] flex h-6 items-end pr-[3px]">
        <div className="flex flex-1 items-end gap-2 pb-1">
          <span className="h-3 w-px bg-[#28407c]" />
          <span className="h-3 w-[15px] border-2 border-[#30406c] bg-[#dfe5f2]" />
          <span className="h-3 w-[15px] border-2 border-[#8c8c8c] bg-[#bcbcbc]" />
          <svg className="ml-3" width="12" height="12" viewBox="0 0 12 12">
            <path d="M1 0 L11 5 L2 12 Z" fill="#2fa02f" stroke="#14601a" />
          </svg>
          <svg className="ml-5" width="14" height="12" viewBox="0 0 14 12">
            <path d="M1 0 H13 V7 L10 11 H4 L1 7 Z" fill="#c03434" stroke="#701818" />
          </svg>
        </div>
        <div className="flex h-6 w-[215px] items-center rounded-[6px] bg-white">
          <span className="flex h-6 w-7 items-center justify-center rounded-l-[6px] bg-[#e4e4e4] pt-2">
            <SearchIcon />
          </span>
          <input
            aria-label="Search"
            placeholder="Search"
            className="min-w-0 flex-1 bg-transparent px-[6px] pt-3 text-[13px] outline-none placeholder:text-[#707070]"
          />
        </div>
      </div>
    </div>
  )
}

export default function App() {
  return (
    <main className="flex h-screen flex-col overflow-hidden bg-[#9bb5d1] font-['DejaVu_Sans_Condensed','Noto_Sans',sans-serif] text-[12px] leading-[16px] text-black">
      <TopBar />
      <div className="grid min-h-0 flex-1 grid-cols-[53.2%_1fr] gap-1">
        <Editor />
        <div className="grid min-h-0 grid-rows-[552fr_408fr] gap-1">
          <ComponentsPanel />
          <PropertiesPanel />
        </div>
      </div>
    </main>
  )
}
